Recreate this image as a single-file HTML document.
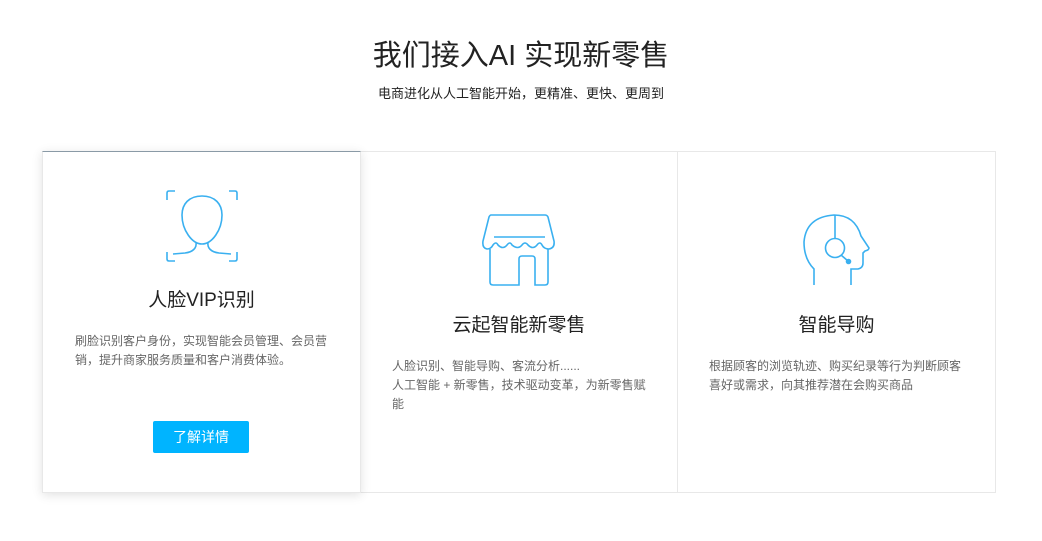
<!DOCTYPE html>
<html><head><meta charset="utf-8"><style>
*{margin:0;padding:0;box-sizing:border-box}
body{width:1042px;height:541px;background:#fff;font-family:"Liberation Sans","Noto Sans CJK SC",sans-serif;position:relative;overflow:hidden}
.h1{position:absolute;top:36px;left:0;width:1042px;text-align:center;font-size:29px;color:#222;line-height:40px}
.sub{position:absolute;top:85px;left:0;width:1042px;text-align:center;font-size:13px;color:#222;line-height:18px}
.card{position:absolute;top:151px;height:342px;border:1px solid #e8e8e8;background:#fff}
.c1{left:42px;width:319px;border-top:1px solid #8a9aa6;box-shadow:0 2px 10px rgba(0,0,0,.12);z-index:2}
.c2{left:360px;width:318px}
.c3{left:677px;width:319px}
.t{position:absolute;left:0;width:100%;text-align:center;font-size:19px;color:#222;line-height:26px}
.d{position:absolute;font-size:12px;color:#666;line-height:19px;white-space:nowrap}
.btn{position:absolute;left:110px;top:269px;width:96px;height:32px;background:#00b4ff;color:#fff;font-size:14px;text-align:center;line-height:32px;border-radius:2px}
svg{position:absolute}
</style></head><body>
<div class="h1">我们接入AI 实现新零售</div>
<div class="sub">电商进化从人工智能开始，更精准、更快、更周到</div>
<div class="card c1">
<svg style="left:122px;top:38px" width="74" height="72" viewBox="0 0 74 72" fill="none" stroke="#3ab0f0" stroke-width="1.6">
<path d="M2 10V3Q2 1 4 1H10M64 1H70Q72 1 72 3V10M2 62V69Q2 71 4 71H10M64 71H70Q72 71 72 69V62"/>
<path d="M37 6C24 6 17 14 17 25C17 40 27 54 37 54C47 54 57 40 57 25C57 14 50 6 37 6Z"/>
<path d="M31 52C32 58 28 62 20 63L8 64M43 52C42 58 46 62 54 63L66 64"/>
</svg>
<div class="t" style="top:136px">人脸VIP识别</div>
<div class="d" style="left:32px;top:180px">刷脸识别客户身份，实现智能会员管理、会员营<br>销，提升商家服务质量和客户消费体验。</div>
<div class="btn">了解详情</div>
</div>
<div class="card c2">
<svg style="left:120px;top:62px" width="76" height="72" viewBox="0 0 76 72" fill="none" stroke="#3ab0f0" stroke-width="1.6">
<path d="M10 1H64Q66 1 67 3L73 27Q74 34 68 35Q63 35 61 31Q59 27 56 31Q52 36 47 31Q44 27 41 31Q37 36 31 31Q29 27 26 31Q22 36 17 31Q15 27 12 31Q10 35 6 35Q1 34 2 27L8 3Q9 1 10 1Z"/>
<path d="M13 23H64"/>
<path d="M9 35V68Q9 71 12 71H38V45Q38 42 41 42H51Q54 42 54 45V71H64Q67 71 67 68V35"/>
</svg>
<div class="t" style="top:161px">云起智能新零售</div>
<div class="d" style="left:31px;top:205px">人脸识别、智能导购、客流分析......<br>人工智能 + 新零售，技术驱动变革，为新零售赋<br>能</div>
</div>
<div class="card c3">
<svg style="left:125px;top:62px" width="68" height="72" viewBox="0 0 68 72" fill="none" stroke="#3ab0f0" stroke-width="1.6">
<path d="M11 71V55Q1 45 1 28Q3 3 31 1Q52 1 58 22L66 34Q66 36 62 37L60 39V49Q60 54 55 55H48V71"/>
<path d="M32 1V24"/>
<circle cx="32" cy="34" r="9.5"/>
<path d="M38 41L45 47"/>
<circle cx="45.5" cy="47.5" r="2" fill="#3ab0f0"/>
</svg>
<div class="t" style="top:161px">智能导购</div>
<div class="d" style="left:31px;top:205px">根据顾客的浏览轨迹、购买纪录等行为判断顾客<br>喜好或需求，向其推荐潜在会购买商品</div>
</div>
</body></html>
